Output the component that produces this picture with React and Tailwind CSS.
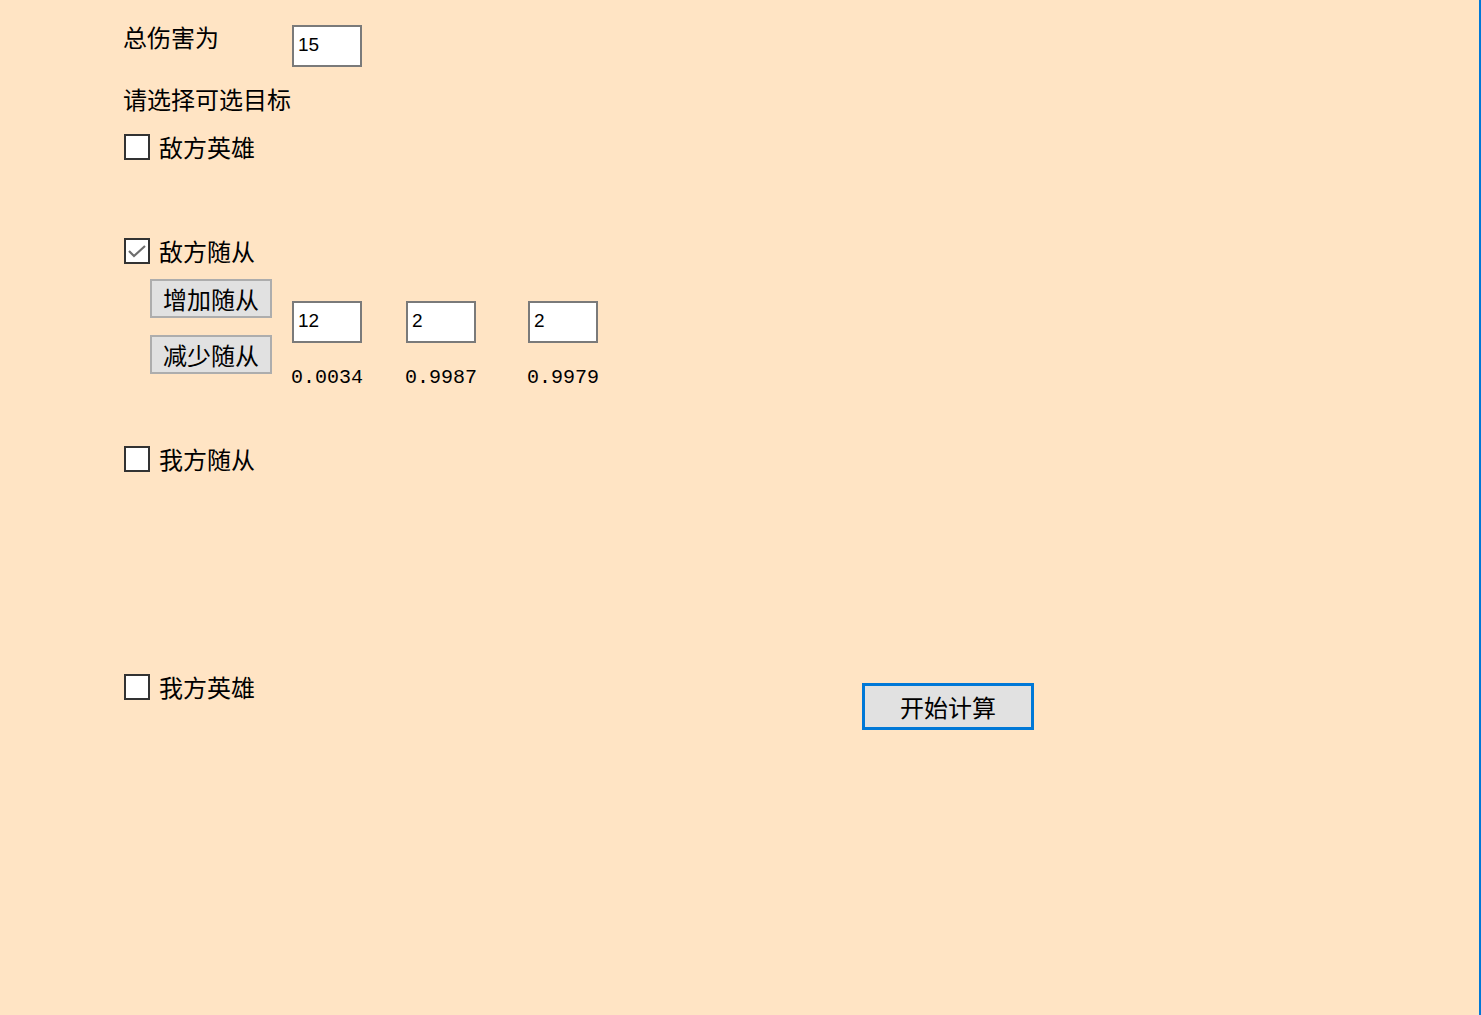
import React from "react";

const cjk = { fontFamily: '"Noto Sans CJK SC", "Noto Sans", sans-serif' };

function Box({ value }) {
  return (
    <div className="w-[70px] h-[42px] bg-white border-2 border-[#7a7a7a] pl-[4px] flex items-center pb-[2px] text-[19px] text-black" style={{ fontFamily: '"Liberation Sans", Arial, sans-serif' }}>
      {value}
    </div>
  );
}

function Check({ checked, label }) {
  return (
    <div className="flex items-center h-[26px]">
      <div className="w-[26px] h-[26px] bg-white border-2 border-[#333333] flex items-center justify-center">
        {checked && (
          <svg width="20" height="16" viewBox="0 0 20 16">
            <path d="M2 8 L7 13 L18 3" fill="none" stroke="#6e6e6e" strokeWidth="2.2" />
          </svg>
        )}
      </div>
      <span className="ml-[9px] text-[24px] leading-[26px] text-black" style={cjk}>{label}</span>
    </div>
  );
}

function Btn({ children }) {
  return (
    <div className="w-[122px] h-[39px] bg-[#e1e1e1] border-2 border-[#adadad] flex items-center justify-center text-[24px] leading-none text-black" style={cjk}>
      {children}
    </div>
  );
}

function Num({ children }) {
  return (
    <div className="mt-[25px] text-[20px] leading-[20px] text-black -ml-[1px]" style={{ fontFamily: '"Liberation Mono", monospace' }}>
      {children}
    </div>
  );
}

export default function App() {
  return (
    <div className="w-[1481px] h-[1015px] bg-[#ffe4c4] border-r-2 border-[#0078d7] overflow-hidden" style={cjk}>
      <div className="pl-[123px] pt-[25px] flex flex-col">
        <div className="flex items-start h-[42px]">
          <span className="w-[169px] text-[24px] leading-[24px] text-black">总伤害为</span>
          <Box value="15" />
        </div>
        <div className="mt-[19px] text-[24px] leading-[26px] text-black">请选择可选目标</div>
        <div className="mt-[22px] pl-[1px]">
          <Check label="敌方英雄" />
        </div>
        <div className="mt-[78px] pl-[1px]">
          <Check checked label="敌方随从" />
        </div>
        <div className="mt-[15px] flex items-start">
          <div className="ml-[27px] flex flex-col gap-[17px]">
            <Btn>增加随从</Btn>
            <Btn>减少随从</Btn>
          </div>
          <div className="ml-[20px] mt-[22px] flex">
            <div className="w-[114px]"><Box value="12" /><Num>0.0034</Num></div>
            <div className="w-[122px]"><Box value="2" /><Num>0.9987</Num></div>
            <div className="w-[80px]"><Box value="2" /><Num>0.9979</Num></div>
          </div>
        </div>
        <div className="mt-[58px] pl-[1px]">
          <Check label="我方随从" />
        </div>
        <div className="mt-[202px] pl-[1px] flex items-start">
          <Check label="我方英雄" />
          <div className="ml-[607px] mt-[9px] w-[172px] h-[47px] bg-[#e1e1e1] border-[3px] border-[#0078d7] flex items-center justify-center text-[24px] leading-none text-black">
            开始计算
          </div>
        </div>
      </div>
    </div>
  );
}
